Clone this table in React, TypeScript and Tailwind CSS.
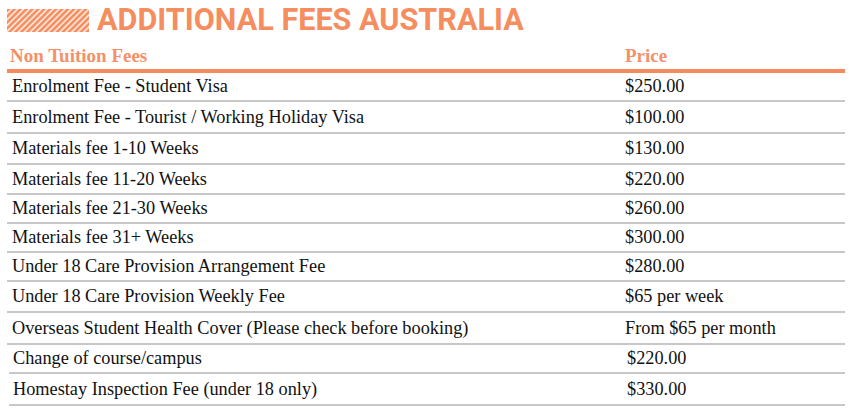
import React from 'react'

const rows = [
  { name: 'Enrolment Fee - Student Visa', price: '$250.00', h: 'h-[29px]' },
  { name: 'Enrolment Fee - Tourist / Working Holiday Visa', price: '$100.00', h: 'h-[32px]' },
  { name: 'Materials fee 1-10 Weeks', price: '$130.00', h: 'h-[31px]' },
  { name: 'Materials fee 11-20 Weeks', price: '$220.00', h: 'h-[30px]' },
  { name: 'Materials fee 21-30 Weeks', price: '$260.00', h: 'h-[29px]' },
  { name: 'Materials fee 31+ Weeks', price: '$300.00', h: 'h-[29px]' },
  { name: 'Under 18 Care Provision Arrangement Fee', price: '$280.00', h: 'h-[29px]' },
  { name: 'Under 18 Care Provision Weekly Fee', price: '$65 per week', h: 'h-[31px]' },
  { name: 'Overseas Student Health Cover (Please check before booking)', price: 'From $65 per month', h: 'h-[32px]' },
  { name: 'Change of course/campus', price: '$220.00', h: 'h-[29px]', shift: true },
  { name: 'Homestay Inspection Fee (under 18 only)', price: '$330.00', h: 'h-[32px]', shift: true },
]

function Stripes() {
  return (
    <svg width="82" height="23" className="block">
      <defs>
        <pattern id="st" width="4.2" height="4.2" patternUnits="userSpaceOnUse" patternTransform="rotate(45)">
          <rect width="2.4" height="4.2" fill="#f68d5f" />
        </pattern>
      </defs>
      <rect width="82" height="23" fill="#fde3d6" />
      <rect width="82" height="23" fill="url(#st)" />
    </svg>
  )
}

export default function App() {
  return (
    <div className="w-[850px] h-[417px] bg-white pl-[7px] pr-[5px] font-['Liberation_Serif',serif] text-[#111]">
      <div className="flex items-center gap-[8px] pt-[3px] h-[34px]">
        <div className="mt-[3px]">
          <Stripes />
        </div>
        <h1 className="origin-left scale-x-[0.956] whitespace-nowrap font-['Roboto',sans-serif] font-bold text-[32px] leading-none text-[#f68d5f]">
          ADDITIONAL FEES AUSTRALIA
        </h1>
      </div>

      <div className="flex items-end h-[35px] pb-[4px] text-[19px] leading-none text-[#f4916a] font-bold">
        <div className="w-[618px] pl-[3px]">Non Tuition Fees</div>
        <div>Price</div>
      </div>
      <div className="h-[4px] bg-[#f58a5c]" />

      {rows.map((r) => (
        <div
          key={r.name}
          className={`flex items-center border-b-2 border-[#c8c8c8] text-[18.3px] leading-none ${r.h} ${r.shift ? 'ml-[2px]' : ''}`}
        >
          <div className={r.shift ? 'w-[618px] pl-[4px]' : 'w-[618px] pl-[5px]'}>{r.name}</div>
          <div>{r.price}</div>
        </div>
      ))}
    </div>
  )
}
